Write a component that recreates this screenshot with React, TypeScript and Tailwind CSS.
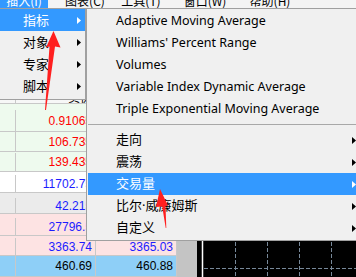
import React from "react";

function Tri({ white }: { white?: boolean }) {
  return (
    <svg width="4" height="7" viewBox="0 0 4 7" className="shrink-0">
      <polygon points="0,0 4,3.5 0,7" fill={white ? "#ffffff" : "#000000"} />
    </svg>
  );
}

type MI = { label: string; hl?: boolean; arrow?: boolean };

function Item1({ label, hl, arrow }: MI) {
  return (
    <div
      className={
        hl
          ? "flex items-center h-[22px] bg-[#3399ff] text-white"
          : "flex items-center h-[22px] text-black"
      }
    >
      <span className="flex-1 pl-[23px] whitespace-nowrap">{label}</span>
      {arrow && (
        <span className="mr-[4px] flex">
          <Tri white={hl} />
        </span>
      )}
    </div>
  );
}

function Item2({ label, hl, arrow }: MI) {
  return (
    <div
      className={
        hl
          ? "flex items-center h-[22px] bg-[#3399ff] text-white"
          : "flex items-center h-[22px] text-black"
      }
    >
      <span className="flex-1 pl-[28px] whitespace-nowrap">{label}</span>
      {arrow && (
        <span className="mr-[9px] flex">
          <Tri white={hl} />
        </span>
      )}
    </div>
  );
}

type Row = {
  cls: string;
  color: string;
  b: string;
  c: string;
};

const rows: Row[] = [
  { cls: "h-[28px] pt-[6px] bg-[#eefaee]", color: "text-[#ff0000]", b: "0.91065", c: "0.91082" },
  { cls: "h-[20px] bg-[#eefaee]", color: "text-[#ff0000]", b: "106.735", c: "106.752" },
  { cls: "h-[20px] pt-[1px] bg-[#eefaee]", color: "text-[#ff0000]", b: "139.435", c: "139.461" },
  { cls: "h-[21px] pt-[3px] bg-white", color: "text-[#1c1cff]", b: "11702.75", c: "11704.25" },
  { cls: "h-[21px] pt-[5px] bg-[#ebebeb]", color: "text-[#1c1cff]", b: "42.215", c: "42.255" },
  { cls: "h-[22px] pt-[4px] bg-[#fde3e3]", color: "text-[#1c1cff]", b: "27796.5", c: "27800.1" },
  { cls: "h-[20px] pt-[2px] bg-[#fde3e3]", color: "text-[#1c1cff]", b: "3363.74", c: "3365.03" },
  { cls: "h-[21px] bg-[#8ecff7]", color: "text-black", b: "460.69", c: "460.88" },
];

export default function App() {
  return (
    <div className="relative w-[356px] h-[277px] overflow-hidden bg-[#f0f0f0]">
      {/* top menu bar */}
      <div className="h-[8px] overflow-hidden bg-[#f4f4f4] flex text-[12px] leading-[12px] font-['Noto_Sans_CJK_SC',sans-serif] text-black">
        <div className="w-[48px] bg-[#3399ff] text-white flex justify-center">
          <span className="-mt-[5px] whitespace-nowrap">插入(I)</span>
        </div>
        <div className="w-[74px] flex justify-center">
          <span className="-mt-[5px] whitespace-nowrap">图表(C)</span>
        </div>
        <div className="w-[38px] flex justify-center">
          <span className="-mt-[5px] whitespace-nowrap">工具(T)</span>
        </div>
        <div className="w-[90px] flex justify-center">
          <span className="-mt-[5px] whitespace-nowrap">窗口(W)</span>
        </div>
        <div className="w-[40px] flex justify-center">
          <span className="-mt-[5px] whitespace-nowrap">帮助(H)</span>
        </div>
      </div>

      {/* content below */}
      <div className="flex h-[269px]">
        {/* table */}
        <div className="w-[177px] flex flex-col font-['Liberation_Sans',sans-serif] text-[12px]">
          <div className="h-[76px] bg-white" />
          <div className="h-[21px] flex bg-[#f7f7f7] border-b border-[#c8c8c8]">
            <div className="w-[16px] border-r border-[#c8c8c8]" />
            <div className="w-[80px] border-r border-[#c8c8c8] flex items-end justify-end pr-[3px] font-['Noto_Sans_CJK_SC',sans-serif] text-[12px] leading-[12px]">
              卖价
            </div>
            <div className="w-[81px] border-r border-[#c8c8c8] flex items-end justify-end pr-[3px] font-['Noto_Sans_CJK_SC',sans-serif] text-[12px] leading-[12px]">
              买价
            </div>
          </div>
          {rows.map((r, i) => (
            <div key={i} className={"flex shrink-0 border-b border-[#c8c8c8] " + r.cls + " " + r.color}>
              <div className="w-[16px] border-r border-[#c8c8c8]" />
              <div className="w-[80px] border-r border-[#c8c8c8] flex items-center justify-end pr-[3px] leading-[14px]">
                {r.b}
              </div>
              <div className="w-[81px] border-r border-[#c8c8c8] flex items-center justify-end pr-[3px] leading-[14px]">
                {r.c}
              </div>
            </div>
          ))}
        </div>
        {/* splitter */}
        <div className="w-[20px] bg-[#c4c4c4]" />
        {/* chart */}
        <div className="flex-1 bg-black overflow-hidden">
          <svg width="159" height="269" viewBox="0 0 159 269">
            <line x1="5.5" y1="0" x2="5.5" y2="269" stroke="#ffffff" strokeWidth="1.5" />
            {[38.5, 70.5, 102.5, 134.5].map((x) => (
              <line key={x} x1={x} y1="0" x2={x} y2="269" stroke="#778899" strokeWidth="1" strokeDasharray="4 2" />
            ))}
            <line x1="7" y1="260.5" x2="159" y2="260.5" stroke="#778899" strokeWidth="1" strokeDasharray="4 2" />
          </svg>
        </div>
      </div>

      {/* first dropdown menu */}
      <div className="absolute left-[-2px] top-[8px] w-[88px] bg-[#f0f0f0] border border-[#a0a0a0] pl-[1px] pb-[2px] text-[13px] font-['Noto_Sans_CJK_SC',sans-serif]">
        <Item1 label="指标" hl arrow />
        <Item1 label="对象" arrow />
        <Item1 label="专家" arrow />
        <Item1 label="脚本" arrow />
      </div>

      {/* second submenu */}
      <div className="absolute left-[86px] top-[8px] w-[280px] bg-[#f0f0f0] border border-[#a0a0a0] pl-[1px] pt-[1px] pb-[1px] font-['Noto_Sans','Noto_Sans_CJK_SC',sans-serif]">
        <div className="text-[12.5px]">
          <Item2 label="Adaptive Moving Average" />
          <Item2 label="Williams' Percent Range" />
          <Item2 label="Volumes" />
          <Item2 label="Variable Index Dynamic Average" />
          <Item2 label="Triple Exponential Moving Average" />
        </div>
        <div className="h-[9px] flex items-center">
          <div className="w-full h-[1px] bg-[#a8a8a8]" />
        </div>
        <div className="text-[13px]">
          <Item2 label="走向" arrow />
          <Item2 label="震荡" arrow />
          <Item2 label="交易量" hl arrow />
          <Item2 label="比尔·威廉姆斯" arrow />
          <Item2 label="自定义" arrow />
        </div>
      </div>

      {/* red annotation arrows */}
      <svg className="absolute left-0 top-0 pointer-events-none" width="356" height="277" viewBox="0 0 356 277">
        <polygon
          points="53.5,31 60.5,47.5 55,46.5 46,110 45,110 49.5,46.5 46,47.5"
          fill="#ff2020"
        />
        <polygon
          points="160,189 168,205.5 165.5,206 166.3,228 165.7,228 162.2,206.5 156,207"
          fill="#ff2020"
        />
      </svg>
    </div>
  );
}
